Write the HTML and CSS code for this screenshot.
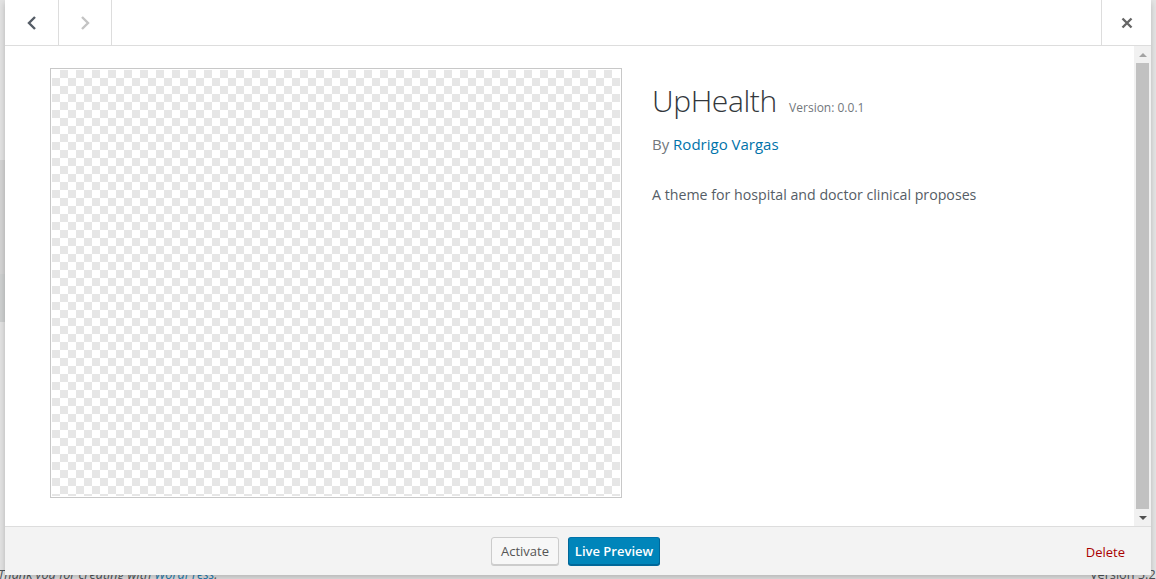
FILE: index.html
```html
<!DOCTYPE html>
<html>
<head>
<meta charset="utf-8">
<link rel="stylesheet" href="styles.css">
</head>
<body>
<div class="admin">
  <div class="admin-side">
    <div class="side-a"></div>
    <div class="side-b"></div>
    <div class="side-c"></div>
    <div class="side-d"></div>
  </div>
  <div class="admin-footer">
    <span class="thanks">Thank you for creating with <a href="#">WordPress</a>.</span>
    <span class="wpver">Version 5.2.2</span>
  </div>
</div>

<div class="modal">
  <div class="modal-header">
    <button class="nav-btn">
      <svg width="12" height="16" viewBox="0 0 12 16"><path d="M9 2 L3 8 L9 14" fill="none" stroke="#555d66" stroke-width="2.4"/></svg>
    </button>
    <button class="nav-btn disabled">
      <svg width="12" height="16" viewBox="0 0 12 16"><path d="M3 2 L9 8 L3 14" fill="none" stroke="#c4c4c4" stroke-width="2.4"/></svg>
    </button>
    <div class="spacer"></div>
    <button class="close-btn">
      <svg width="12" height="12" viewBox="0 0 12 12"><path d="M1.5 1.5 L10.5 10.5 M10.5 1.5 L1.5 10.5" stroke="#666" stroke-width="2.4"/></svg>
    </button>
  </div>
  <div class="modal-body">
    <div class="content">
      <div class="screenshot"><div class="checker"></div></div>
      <div class="info">
        <h2 class="theme-name">UpHealth <span class="version">Version: 0.0.1</span></h2>
        <p class="author">By <a href="#">Rodrigo Vargas</a></p>
        <p class="desc">A theme for hospital and doctor clinical proposes</p>
      </div>
    </div>
    <div class="scrollbar">
      <div class="arrow up"></div>
      <div class="track"><div class="thumb"></div></div>
      <div class="arrow down"></div>
    </div>
  </div>
  <div class="modal-footer">
    <div class="actions">
      <button class="btn">Activate</button>
      <button class="btn primary">Live Preview</button>
    </div>
    <a class="delete" href="#">Delete</a>
  </div>
</div>
</body>
</html>
```

FILE: styles.css
```css
html, body {
  margin: 0;
  padding: 0;
  height: 100%;
}
body {
  background: #e4e4e4;
  font-family: "Open Sans", "Noto Sans", sans-serif;
  overflow: hidden;
  position: relative;
}
.admin {
  height: 579px;
  position: relative;
}
.admin-side {
  width: 5px;
  height: 579px;
  display: flex;
  flex-direction: column;
}
.side-a { height: 160px; background: #e2e2e2; }
.side-b { height: 114px; background: #d3d3d3; }
.side-c { height: 48px; background: #cdcfcf; }
.side-d { flex: 1; background: #e2e2e2; }
.admin-footer {
  position: absolute;
  left: 0;
  right: 0;
  top: 565px;
  display: flex;
  justify-content: space-between;
  font-size: 12.7px;
  color: #4d5256;
}
.thanks { font-style: italic; margin-left: -2px; }
.thanks a { color: #217cb0; text-decoration: none; }
.wpver { margin-right: -40px; width: 106px; }

.modal {
  position: absolute;
  left: 5px;
  top: 0;
  width: 1146px;
  height: 575px;
  background: #fff;
  display: flex;
  flex-direction: column;
  box-shadow: 0 3px 6px rgba(0,0,0,0.2);
}
.modal-header {
  height: 45px;
  border-bottom: 1px solid #ddd;
  display: flex;
  flex-shrink: 0;
}
.nav-btn, .close-btn {
  border: 0;
  background: #fff;
  padding: 0;
  margin: 0;
  width: 53px;
  height: 45px;
  border-right: 1px solid #ddd;
  display: flex;
  align-items: center;
  justify-content: center;
}
.nav-btn:first-child { width: 54px; }
.spacer { flex: 1; }
.close-btn {
  border-right: 0;
  border-left: 1px solid #ddd;
  width: 50px;
}
.modal-body {
  flex: 1;
  display: flex;
  min-height: 0;
}
.content {
  flex: 1;
  display: flex;
  padding: 22px 0 0 45px;
}
.screenshot {
  width: 572px;
  height: 430px;
  box-sizing: border-box;
  border: 1px solid #c8c8c8;
  padding: 1px;
  background: #fff;
  flex-shrink: 0;
}
.checker {
  width: 100%;
  height: 100%;
  background-color: #fff;
  background-image:
    linear-gradient(45deg, #e6e6e6 25%, transparent 25%, transparent 75%, #e6e6e6 75%),
    linear-gradient(45deg, #e6e6e6 25%, transparent 25%, transparent 75%, #e6e6e6 75%);
  background-size: 16px 16px;
  background-position: 0 0, 8px 8px;
}
.info {
  padding-left: 30px;
  padding-top: 10px;
}
.theme-name {
  margin: 0;
  font-size: 30px;
  font-weight: 300;
  color: #32373c;
  line-height: 46px;
  letter-spacing: -0.4px;
}
.version {
  font-size: 12px;
  font-weight: 400;
  color: #72777c;
  letter-spacing: 0;
  margin-left: 5px;
}
.author {
  margin: 2px 0 0;
  font-size: 15px;
  color: #72777c;
  line-height: 22px;
}
.author a { color: #0073aa; text-decoration: none; }
.desc {
  margin: 29px 0 0;
  font-size: 14.2px;
  color: #555d66;
  line-height: 22px;
}
.scrollbar {
  width: 17px;
  background: #f1f1f1;
  display: flex;
  flex-direction: column;
  flex-shrink: 0;
}
.arrow {
  height: 17px;
  display: flex;
  align-items: center;
  justify-content: center;
}
.arrow.up::before {
  content: "";
  border-left: 4px solid transparent;
  border-right: 4px solid transparent;
  border-bottom: 4px solid #a3a3a3;
}
.arrow.down::before {
  content: "";
  border-left: 4px solid transparent;
  border-right: 4px solid transparent;
  border-top: 4px solid #505050;
}
.track {
  flex: 1;
  padding: 0 2px;
}
.thumb {
  height: 100%;
  background: #c1c1c1;
}
.modal-footer {
  height: 48px;
  border-top: 1px solid #ddd;
  background: #f3f3f3;
  display: flex;
  align-items: center;
  justify-content: flex-end;
  position: relative;
  padding: 0 26px 0 0;
  flex-shrink: 0;
}
.actions {
  position: absolute;
  left: 486px;
  top: 10px;
  display: flex;
  gap: 9px;
}
.btn {
  height: 28px;
  font-family: "Open Sans", "Noto Sans", sans-serif;
  font-size: 13px;
  padding: 0 9px;
  border: 1px solid #ccc;
  border-radius: 3px;
  background: #f7f7f7;
  color: #555;
  box-shadow: 0 1px 0 #ccc;
  width: 68px;
}
.btn.primary {
  width: 92px;
  background: #0085ba;
  border-color: #0073aa #006799 #006799;
  color: #fff;
  box-shadow: 0 1px 0 #006799;
  font-weight: 600;
  padding: 0;
}
.delete {
  color: #a00;
  font-size: 13px;
  text-decoration: none;
  margin-top: 2px;
}
```
